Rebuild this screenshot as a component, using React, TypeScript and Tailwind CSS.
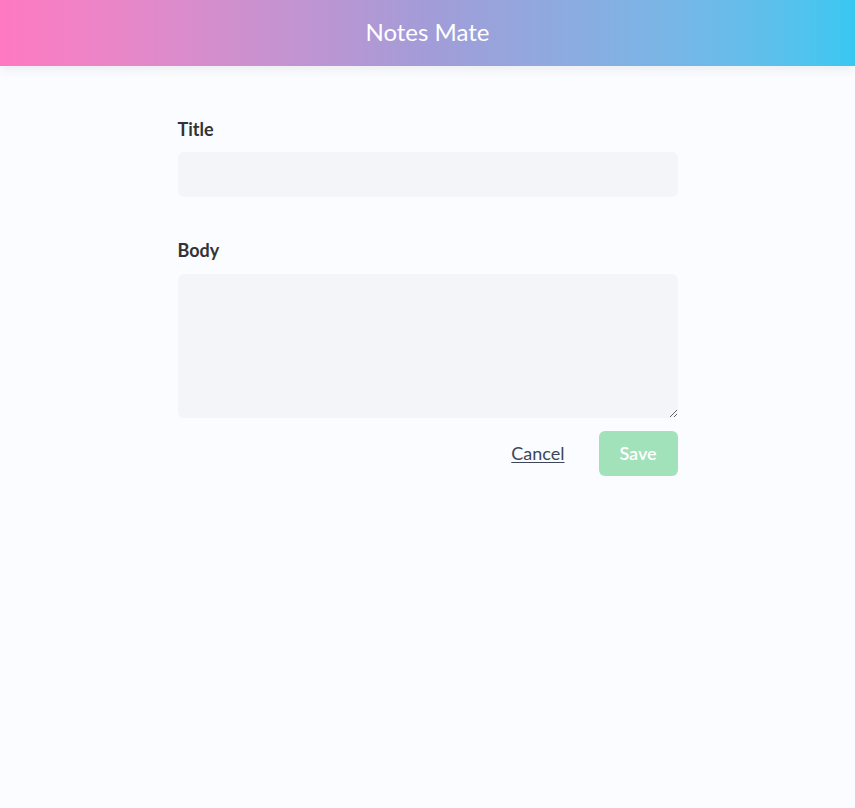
import React from 'react';

const App: React.FC = () => {
  return (
    <div
      className="min-h-[808px] bg-[#fafcff] text-[#333333]"
      style={{ fontFamily: 'Lato, "Open Sans", sans-serif' }}
    >
      <header className="h-[66px] flex items-center justify-center pb-[3px] bg-gradient-to-r from-[#ff79c1] via-[#a29cd8] to-[#37c8f1] shadow-[0_4px_10px_rgba(0,0,0,0.06)]">
        <h1 className="text-white text-[24px] leading-none">Notes Mate</h1>
      </header>

      <form className="w-[500px] mx-auto pt-[50px]">
        <label className="block text-[18px] leading-[27px] font-bold mb-[9px]">Title</label>
        <input
          type="text"
          className="block w-full h-[45px] rounded-md bg-[#f4f5f8] px-3 outline-none"
        />

        <label className="block text-[18px] leading-[27px] font-bold mt-[40px] mb-[10px]">Body</label>
        <textarea className="block w-full h-[144px] rounded-md bg-[#f4f5f8] px-3 py-2 outline-none" />

        <div className="flex items-center justify-end mt-[13px]">
          <button type="button" className="text-[18px] text-[#3c4658] underline underline-offset-2 mr-[34px]">
            Cancel
          </button>
          <button
            type="button"
            disabled
            className="w-[79px] h-[45px] rounded-md bg-[#a1e2bb] text-white text-[18px] font-semibold"
          >
            Save
          </button>
        </div>
      </form>
    </div>
  );
};

export default App;
